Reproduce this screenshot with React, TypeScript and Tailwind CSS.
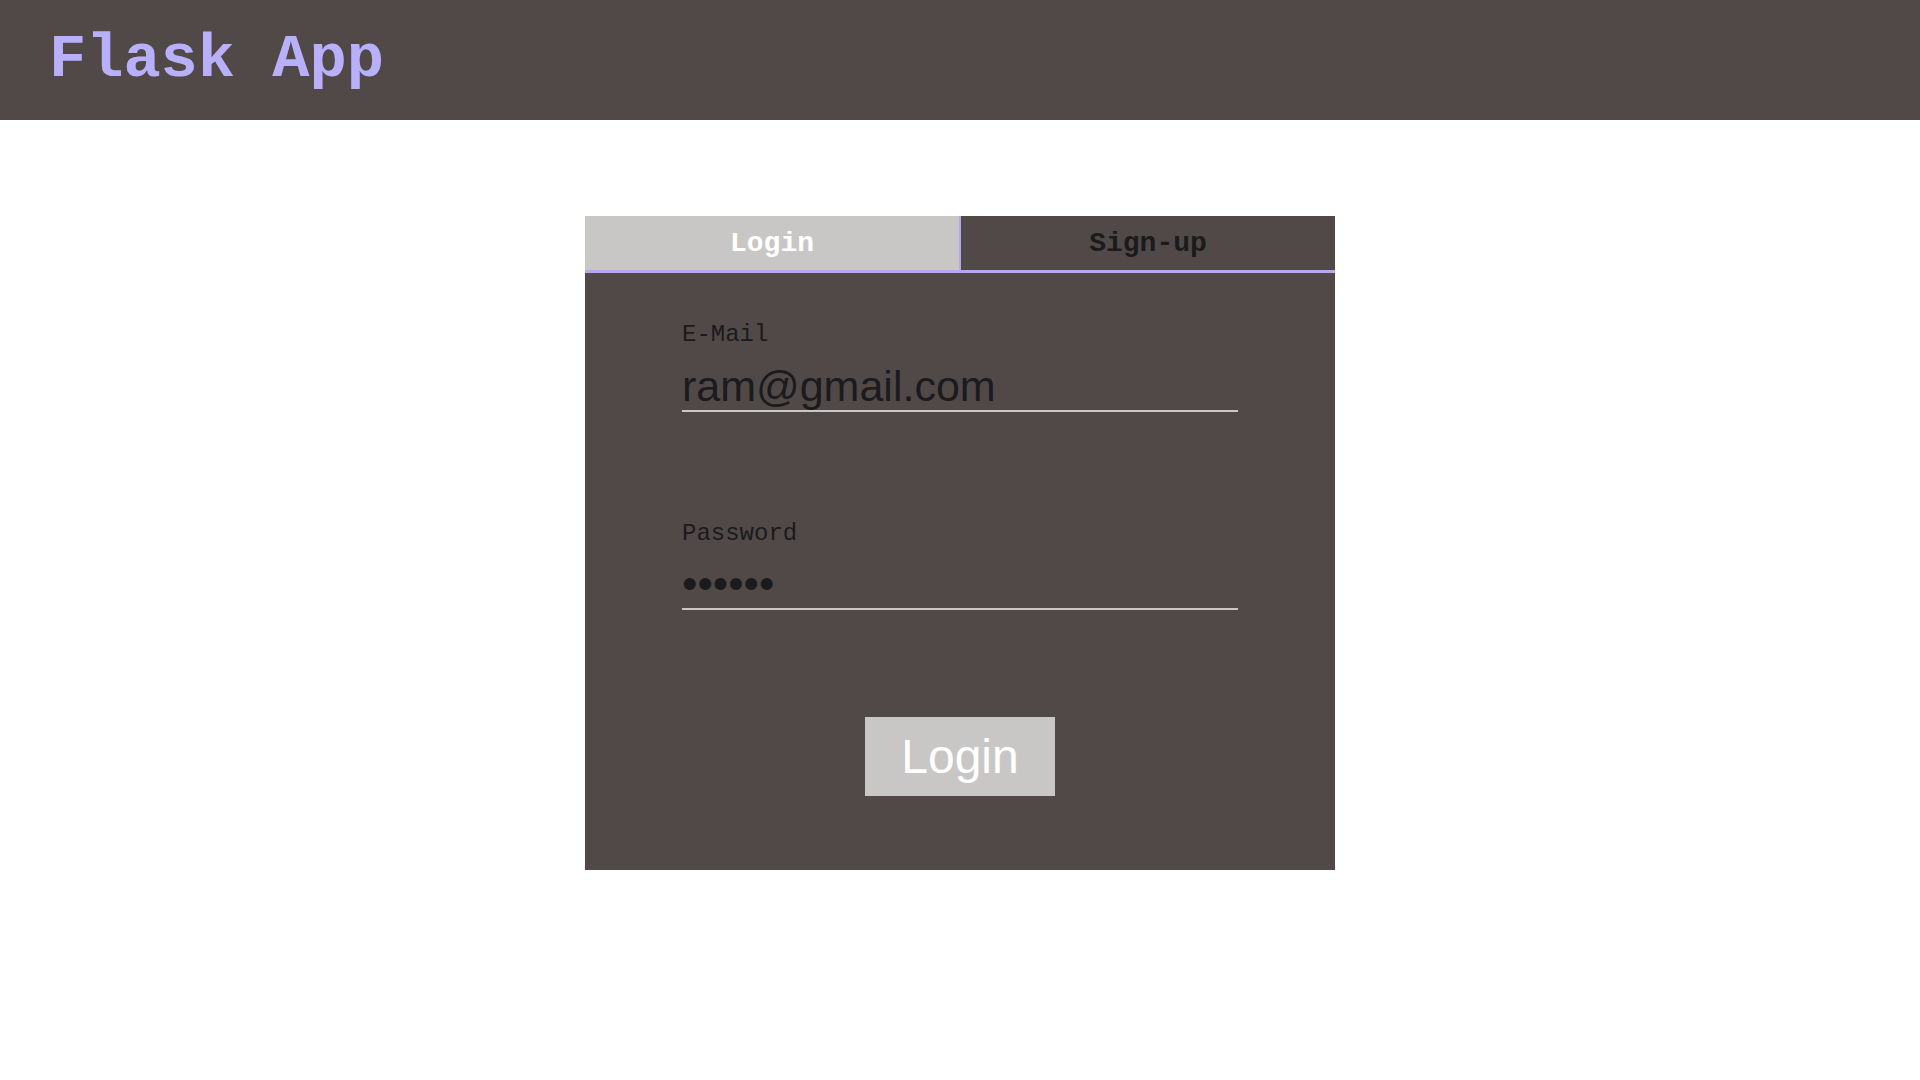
import React, { useState } from "react";

export default function App() {
  const [tab, setTab] = useState<"login" | "signup">("login");
  const [email, setEmail] = useState("ram@gmail.com");
  const [senha, setSenha] = useState("123456");

  const mono = { fontFamily: '"Liberation Mono", "DejaVu Sans Mono", monospace' };
  const sans = { fontFamily: '"Liberation Sans", Arial, sans-serif' };

  return (
    <div className="min-h-screen bg-white">
      <header className="h-[120px] bg-[#514947] flex items-center px-[49px]">
        <h1 style={mono} className="text-[62px] font-bold text-[#b9b0fb] leading-none">Flask App</h1>
      </header>

      <div className="flex justify-center pt-[96px]">
        <div className="w-[750px] bg-[#514947]">
          <div style={mono} className="flex h-[57px] border-b-[3px] border-[#b3a9f3]">
            <button
              onClick={() => setTab("login")}
              className={"w-[374px] pt-[2px] text-[28px] font-bold " + (tab === "login" ? "bg-[#c9c7c5] text-white" : "bg-[#514947] text-[#1b1a1d]")}
            >
              Login
            </button>
            <button
              onClick={() => setTab("signup")}
              className={"flex-1 pt-[2px] border-l-2 border-[#b3a9f3] text-[28px] font-bold " + (tab === "signup" ? "bg-[#c9c7c5] text-white" : "bg-[#514947] text-[#1b1a1d]")}
            >
              Sign-up
            </button>
          </div>

          <form onSubmit={(e) => e.preventDefault()} className="px-[97px] pt-[48px] pb-[74px]">
            <label style={mono} className="block text-[24px] leading-[28px] text-[#1b1a1d]">E-Mail</label>
            <input
              style={sans}
              value={email}
              onChange={(e) => setEmail(e.target.value)}
              className="mt-[13px] block w-full h-[50px] bg-transparent border-b-2 border-[#c9c7c5] text-[43px] text-[#1b1a1d] outline-none"
            />

            <label style={mono} className="mt-[108px] block text-[24px] leading-[28px] text-[#1b1a1d]">Password</label>
            <input
              style={sans}
              type="password"
              value={senha}
              onChange={(e) => setSenha(e.target.value)}
              className="mt-[12px] block w-full h-[50px] bg-transparent border-b-2 border-[#c9c7c5] text-[44px] text-[#1b1a1d] outline-none"
            />

            <div className="flex justify-center mt-[107px]">
              <button style={sans} className="w-[190px] h-[79px] bg-[#c9c7c5] text-white text-[48px]">Login</button>
            </div>
          </form>
        </div>
      </div>
    </div>
  );
}
